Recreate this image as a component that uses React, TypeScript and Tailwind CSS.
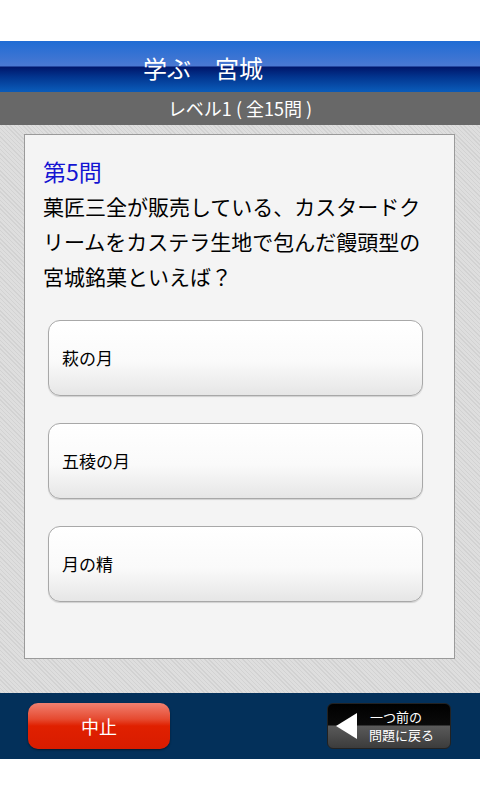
import React from "react";

const FONT = "font-['Noto_Sans_CJK_JP','Noto_Sans',sans-serif]";

const OPTIONS = ["萩の月", "五稜の月", "月の精"];

const OptionButton: React.FC<{ label: string }> = ({ label }) => (
  <button className="flex h-[76px] w-full items-center rounded-[12px] border border-[#a8a8a8] bg-[linear-gradient(#ffffff,#fafafa_55%,#e6e6e6)] px-[13px] text-left text-[17px] text-black shadow-[0_1px_1px_rgba(0,0,0,0.15)]">
    {label}
  </button>
);

const App: React.FC = () => {
  return (
    <div className={`flex h-[800px] w-[480px] flex-col bg-white ${FONT}`}>
      <div className="h-[41px] shrink-0" />

      {/* header */}
      <div className="relative h-[51px] shrink-0 bg-[linear-gradient(#1f6cd4_0px,#4a78d2_25px,#00166a_26px,#02358f_36px,#0a5ab8_50px)]">
        <div className="absolute left-[143px] top-[15px] text-[24px] leading-none text-white">
          学ぶ　宮城
        </div>
      </div>
      <div className="flex h-[33px] shrink-0 items-center justify-center bg-[#686868] text-[18px] text-white">
        レベル1 ( 全15問 )
      </div>

      {/* body */}
      <div className="flex h-[568px] shrink-0 flex-col bg-[repeating-linear-gradient(45deg,#d2d2d2_0px,#d2d2d2_1px,#dedede_1px,#dedede_3px)] px-[24px] pt-[9px]">
        <div className="flex h-[525px] w-[431px] flex-col border border-[#9a9a9a] bg-[#f4f4f4] pl-[18px] pr-[10px] pt-[20px]">
          <div className="text-[23px] leading-[32px] text-[#1414d2]">第5問</div>
          <div className="mt-[2px] whitespace-nowrap text-[21px] leading-[35px] text-black">
            菓匠三全が販売している、カスタードク
            <br />
            リームをカステラ生地で包んだ饅頭型の
            <br />
            宮城銘菓といえば？
          </div>
          <div className="mt-[26px] flex flex-col gap-[27px] pl-[5px] pr-[21px]">
            {OPTIONS.map((o) => (
              <OptionButton key={o} label={o} />
            ))}
          </div>
        </div>
      </div>

      {/* footer */}
      <div className="flex h-[66px] shrink-0 items-center justify-between bg-[#03305a] pl-[28px] pr-[29px]">
        <button className="flex h-[46px] w-[142px] items-center justify-center rounded-[10px] bg-[linear-gradient(#f08070,#e64a30_35%,#e02000_50%,#d81c00)] text-[18px] text-white shadow-[0_1px_2px_rgba(0,0,0,0.5)]">
          中止
        </button>
        <button className="relative flex h-[46px] w-[124px] items-center overflow-hidden rounded-[6px] border border-[#222] bg-[linear-gradient(#000000_0px,#0a0a0a_21px,#5a5a5a_22px,#3a3a3a_45px)] text-white">
          <svg width="24" height="30" viewBox="0 0 24 30" className="ml-[7px] shrink-0">
            <polygon points="22,2 22,28 1,15" fill="#ffffff" />
          </svg>
          <span className="ml-[10px] flex flex-col items-start text-[13px] leading-[18px]">
            <span className="ml-[1px]">一つ前の</span>
            <span>問題に戻る</span>
          </span>
        </button>
      </div>

      <div className="flex-1 bg-white" />
    </div>
  );
};

export default App;
